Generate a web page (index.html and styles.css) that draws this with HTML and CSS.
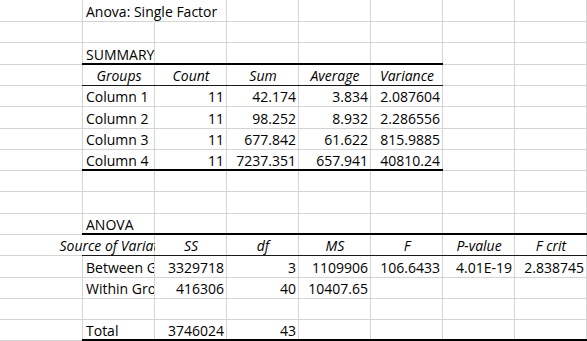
FILE: index.html
```html
<!DOCTYPE html>
<html lang="en">
<head>
<meta charset="utf-8">
<title>Anova: Single Factor</title>
<link rel="stylesheet" href="styles.css">
</head>
<body>
<div class="sheet">
  <!-- row 1 -->
  <div class="c"></div><div class="c nb">Anova: Single Factor</div><div class="c"></div><div class="c"></div><div class="c"></div><div class="c"></div><div class="c"></div><div class="c"></div>
  <!-- row 2 -->
  <div class="c"></div><div class="c"></div><div class="c"></div><div class="c"></div><div class="c"></div><div class="c"></div><div class="c"></div><div class="c"></div>
  <!-- row 3 -->
  <div class="c"></div><div class="c thick">SUMMARY</div><div class="c thick"></div><div class="c thick"></div><div class="c thick"></div><div class="c thick"></div><div class="c"></div><div class="c"></div>
  <!-- row 4 -->
  <div class="c"></div><div class="c h thin">Groups</div><div class="c h thin">Count</div><div class="c h thin">Sum</div><div class="c h thin">Average</div><div class="c h thin">Variance</div><div class="c"></div><div class="c"></div>
  <!-- row 5 -->
  <div class="c"></div><div class="c">Column 1</div><div class="c r">11</div><div class="c r">42.174</div><div class="c r">3.834</div><div class="c r">2.087604</div><div class="c"></div><div class="c"></div>
  <!-- row 6 -->
  <div class="c"></div><div class="c">Column 2</div><div class="c r">11</div><div class="c r">98.252</div><div class="c r">8.932</div><div class="c r">2.286556</div><div class="c"></div><div class="c"></div>
  <!-- row 7 -->
  <div class="c"></div><div class="c">Column 3</div><div class="c r">11</div><div class="c r">677.842</div><div class="c r">61.622</div><div class="c r">815.9885</div><div class="c"></div><div class="c"></div>
  <!-- row 8 -->
  <div class="c"></div><div class="c thick">Column 4</div><div class="c r thick">11</div><div class="c r thick">7237.351</div><div class="c r thick">657.941</div><div class="c r thick">40810.24</div><div class="c"></div><div class="c"></div>
  <!-- row 9 -->
  <div class="c"></div><div class="c"></div><div class="c"></div><div class="c"></div><div class="c"></div><div class="c"></div><div class="c"></div><div class="c"></div>
  <!-- row 10 -->
  <div class="c"></div><div class="c"></div><div class="c"></div><div class="c"></div><div class="c"></div><div class="c"></div><div class="c"></div><div class="c"></div>
  <!-- row 11 -->
  <div class="c"></div><div class="c thick">ANOVA</div><div class="c thick"></div><div class="c thick"></div><div class="c thick"></div><div class="c thick"></div><div class="c thick"></div><div class="c thick"></div>
  <!-- row 12 -->
  <div class="c nb"></div><div class="c h thin src"><span>Source of Variation</span></div><div class="c h thin">SS</div><div class="c h thin">df</div><div class="c h thin">MS</div><div class="c h thin">F</div><div class="c h thin">P-value</div><div class="c h thin">F crit</div>
  <!-- row 13 -->
  <div class="c"></div><div class="c clip">Between Groups</div><div class="c r">3329718</div><div class="c r">3</div><div class="c r">1109906</div><div class="c r">106.6433</div><div class="c r">4.01E-19</div><div class="c r">2.838745</div>
  <!-- row 14 -->
  <div class="c"></div><div class="c clip">Within Groups</div><div class="c r">416306</div><div class="c r">40</div><div class="c r">10407.65</div><div class="c"></div><div class="c"></div><div class="c"></div>
  <!-- row 15 -->
  <div class="c"></div><div class="c"></div><div class="c"></div><div class="c"></div><div class="c"></div><div class="c"></div><div class="c"></div><div class="c"></div>
  <!-- row 16 -->
  <div class="c"></div><div class="c thick">Total</div><div class="c r thick">3746024</div><div class="c r thick">43</div><div class="c thick"></div><div class="c thick"></div><div class="c thick"></div><div class="c thick"></div>
</div>
</body>
</html>
```
FILE: styles.css
```css
html, body {
  margin: 0;
  padding: 0;
  background: #fff;
}

body {
  width: 587px;
  height: 341px;
  overflow: hidden;
  font-family: "Open Sans", "Liberation Sans", sans-serif;
  font-size: 14px;
  color: #000;
}

.sheet {
  display: grid;
  grid-template-columns: 83px repeat(7, 72px);
  grid-template-rows: 22px 21px 22px 21px 21px 22px 21px 21px 21px 22px 21px 21px 22px 21px 21px 21px;
}

.c {
  position: relative;
  box-sizing: border-box;
  border-right: 1px solid #d4d4d4;
  border-bottom: 1px solid #d4d4d4;
  display: flex;
  align-items: flex-end;
  justify-content: flex-start;
  padding: 0 2px 1px 3px;
  line-height: 16px;
  white-space: nowrap;
  min-width: 0;
}

.r {
  justify-content: flex-end;
}

.h {
  justify-content: center;
  font-style: italic;
}

.nb {
  border-right-color: transparent;
}

.clip {
  overflow: hidden;
}

.src {
  padding-left: 0;
  padding-right: 0;
  clip-path: inset(0 0 0 -120px);
}

.src span {
  flex: none;
}

.thick::after,
.thin::after {
  content: "";
  position: absolute;
  left: -1px;
  right: -1px;
  bottom: -1px;
  background: #000;
}

.thick::after {
  height: 2px;
}

.thin::after {
  height: 1px;
  background: #1a1a1a;
}
```
